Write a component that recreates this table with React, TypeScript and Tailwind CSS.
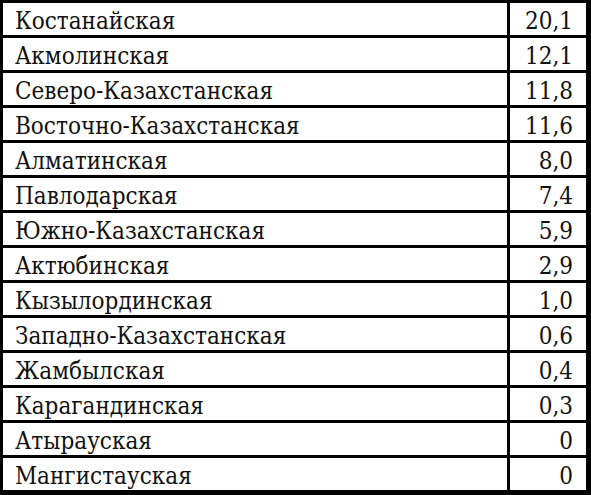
const rows: [string, string][] = [
  ["Костанайская", "20,1"],
  ["Акмолинская", "12,1"],
  ["Северо-Казахстанская", "11,8"],
  ["Восточно-Казахстанская", "11,6"],
  ["Алматинская", "8,0"],
  ["Павлодарская", "7,4"],
  ["Южно-Казахстанская", "5,9"],
  ["Актюбинская", "2,9"],
  ["Кызылординская", "1,0"],
  ["Западно-Казахстанская", "0,6"],
  ["Жамбылская", "0,4"],
  ["Карагандинская", "0,3"],
  ["Атырауская", "0"],
  ["Мангистауская", "0"],
];

export default function App() {
  return (
    <div className="w-[591px] h-[495px] bg-white">
      <div className="flex flex-col border-t-[3px] border-l-[3px] border-r-[5px] border-b-[5px] border-black text-[#111] text-[24px] leading-none font-['DejaVu_Serif_Condensed','DejaVu_Serif',serif]">
        {rows.map(([name, value], i) => (
          <div
            key={name}
            className={`flex ${i === 0 ? "h-[32px]" : "h-[35px] border-t-[3px] border-black"}`}
          >
            <div className="w-[504px] flex items-center pl-[12px] pt-[3px]">{name}</div>
            <div className="flex-1 flex items-center justify-end pr-[13px] pt-[3px] border-l-[3px] border-black">
              {value}
            </div>
          </div>
        ))}
      </div>
    </div>
  );
}
